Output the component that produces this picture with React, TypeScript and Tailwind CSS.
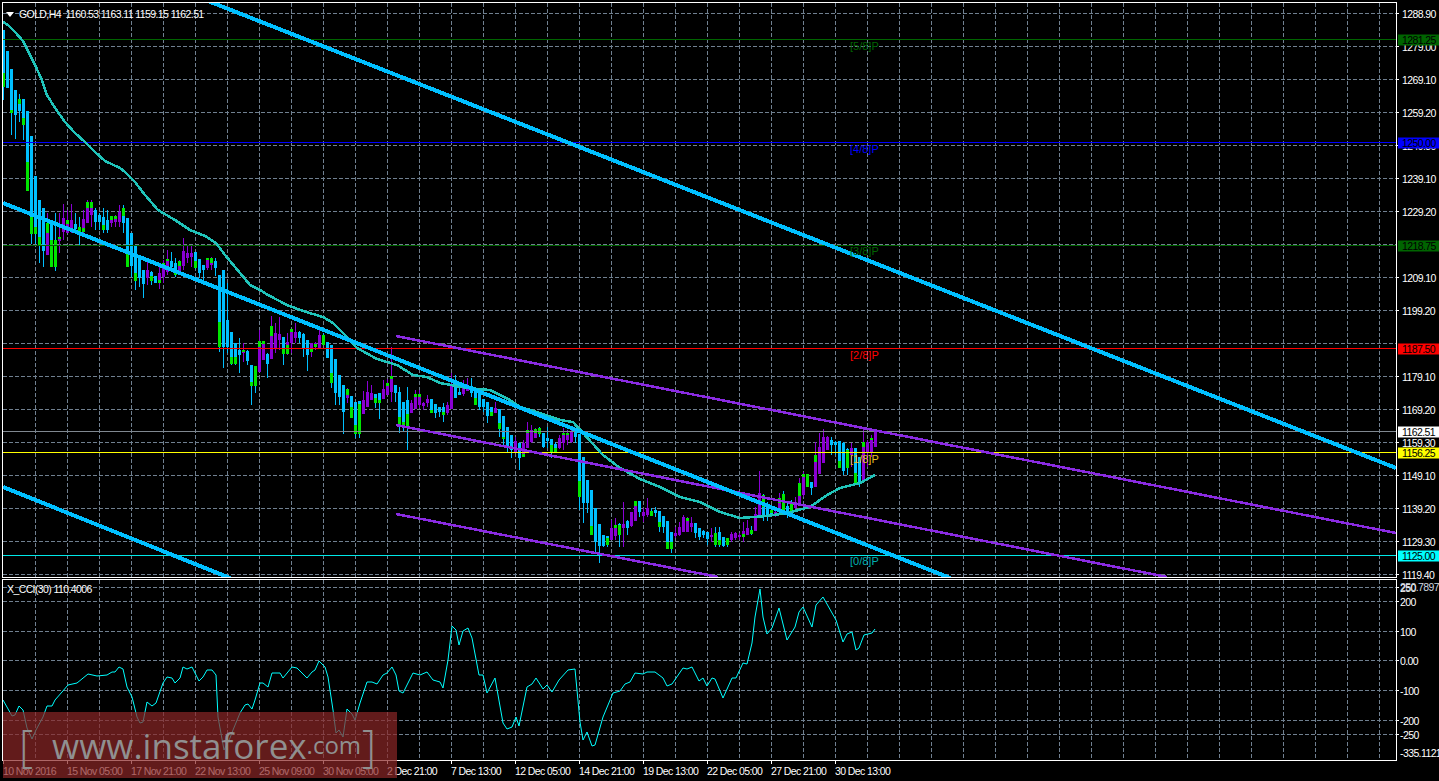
const FONT = "[font-family:'Liberation_Sans',Arial,sans-serif]";

type Row = [number, number, number, number, "b" | "p", number];

// candles traced off the chart: [wick top, body top, body bottom, wick bottom, colour, green part]
// y values are in thirds of a pixel, from the base of each block. green < 0 sits on top of the body
const A: Row[] = [
  [90, 90, 262, 300, "b", 42], [153, 153, 263, 263, "b", 0], [207, 207, 340, 405, "b", 10], [270, 270, 345, 418, "b", 0],
  [282, 297, 333, 365, "b", -15], [297, 297, 375, 420, "b", 20], [333, 333, 572, 572, "b", 87], [408, 408, 702, 733, "b", 52],
  [528, 528, 702, 733, "b", 22], [600, 600, 735, 790, "b", 23], [625, 625, 752, 800, "b", 0], [640, 670, 765, 765, "p", -30],
  [670, 670, 800, 800, "b", 80], [640, 720, 800, 812, "b", 80], [640, 712, 722, 760, "p", -5], [612, 655, 697, 720, "p", 0],
  [630, 660, 700, 700, "p", -12], [612, 660, 685, 700, "p", 0], [640, 672, 688, 700, "b", 0], [650, 680, 695, 735, "b", 15],
  [630, 657, 695, 700, "p", 13], [600, 605, 670, 670, "p", -18], [600, 605, 645, 680, "p", -18], [625, 630, 665, 690, "b", 0],
  [640, 645, 665, 690, "b", 0], [625, 652, 690, 700, "b", 14], [630, 660, 690, 700, "b", 0], [648, 648, 668, 680, "p", -12],
  [645, 648, 665, 680, "p", -8], [615, 635, 665, 680, "p", 0], [615, 625, 670, 700, "b", -25], [655, 655, 800, 800, "b", 47],
  [700, 700, 798, 830, "b", 0], [735, 735, 843, 870, "b", 23], [775, 775, 835, 860, "b", 0], [810, 810, 853, 895, "b", 0],
  [785, 810, 835, 855, "p", 0], [812, 815, 843, 855, "b", 14], [828, 828, 848, 850, "b", 0], [800, 820, 848, 868, "p", 10],
  [780, 790, 830, 848, "p", -10], [750, 778, 815, 825, "p", -6], [755, 782, 800, 815, "b", 0], [775, 790, 825, 830, "b", 15],
  [780, 783, 815, 825, "p", -15], [715, 753, 798, 810, "p", 0], [735, 760, 775, 790, "p", 0], [735, 758, 772, 800, "p", 0],
  [755, 757, 805, 808, "b", 22], [778, 778, 820, 835, "b", 0], [796, 796, 810, 850, "b", 0], [775, 775, 803, 810, "p", -7],
  [770, 775, 795, 810, "p", -15], [775, 782, 803, 828, "b", 0],
];

const B: Row[] = [
  [-45, -45, 170, 185, "b", 75], [-60, -60, 170, 235, "b", 0], [-20, 90, 170, 190, "b", 0], [125, 125, 222, 225, "b", 20],
  [160, 160, 222, 225, "b", 20], [145, 180, 195, 250, "b", 0], [160, 180, 188, 215, "p", -5], [180, 183, 213, 225, "b", 0],
  [225, 225, 288, 345, "b", 13], [228, 228, 288, 308, "b", 60], [120, 153, 245, 245, "p", -17], [153, 153, 210, 210, "p", -10],
  [190, 192, 222, 265, "b", 0], [78, 108, 207, 207, "p", -30], [100, 130, 175, 190, "p", 0], [82, 132, 150, 180, "p", 0],
  [140, 140, 192, 225, "b", 15], [130, 155, 192, 195, "p", 27], [118, 118, 160, 190, "p", -8], [100, 125, 145, 160, "p", 0],
  [122, 125, 145, 160, "b", 0], [130, 133, 175, 200, "b", 0], [150, 150, 195, 243, "b", 0], [160, 160, 185, 200, "p", 12],
  [155, 160, 172, 180, "p", 8], [120, 135, 175, 175, "p", 0], [130, 135, 165, 165, "b", 30], [155, 155, 205, 205, "b", 0],
  [165, 165, 280, 295, "b", 30], [208, 208, 308, 345, "b", 0], [255, 255, 320, 345, "b", 0], [285, 285, 365, 432, "b", 0],
  [295, 297, 325, 340, "p", -17], [318, 318, 384, 384, "b", 32], [336, 336, 432, 445, "b", 27], [332, 332, 432, 445, "b", 90],
  [302, 330, 372, 372, "p", 0], [273, 305, 350, 350, "p", 0], [285, 308, 330, 330, "p", 0], [312, 312, 340, 355, "b", 14],
  [310, 310, 338, 387, "b", 10], [270, 297, 327, 327, "p", 0], [268, 280, 315, 315, "p", -10], [172, 258, 305, 335, "p", -10],
  [285, 285, 310, 335, "b", 0], [292, 305, 405, 428, "b", 25], [335, 335, 405, 425, "b", 8], [292, 330, 410, 480, "b", 40],
  [330, 340, 370, 370, "p", 0], [300, 312, 358, 358, "p", -10], [300, 312, 345, 355, "p", -10], [335, 340, 348, 360, "p", 0],
  [315, 327, 340, 350, "p", 0], [327, 327, 368, 370, "b", 10], [342, 342, 368, 385, "b", 0], [350, 350, 365, 380, "b", 0],
  [340, 352, 375, 395, "b", 10], [335, 345, 368, 375, "p", 0], [250, 285, 357, 357, "p", 0], [255, 290, 325, 325, "b", 0],
  [290, 305, 316, 316, "b", 0], [270, 287, 312, 318, "p", 0], [265, 292, 302, 302, "p", 0], [265, 288, 310, 320, "b", 0],
  [297, 297, 345, 345, "b", 22], [305, 305, 352, 360, "b", 0], [328, 328, 352, 365, "b", 0], [335, 335, 378, 400, "b", 0],
  [352, 352, 378, 378, "b", 12], [335, 355, 368, 370, "p", 0], [358, 358, 418, 440, "b", 18], [378, 378, 448, 470, "b", 5],
  [412, 412, 475, 490, "b", 0], [435, 435, 480, 505, "b", 0], [440, 452, 490, 490, "p", 0], [460, 460, 503, 540, "b", 0],
  [450, 460, 500, 502, "p", 10], [395, 420, 473, 473, "p", -10], [405, 420, 455, 460, "p", 0], [415, 418, 443, 445, "p", -12],
  [412, 415, 432, 440, "b", 17], [428, 428, 470, 475, "b", 0], [410, 445, 453, 475, "b", 0], [448, 448, 485, 505, "b", 20],
  [455, 462, 485, 490, "b", 12], [435, 445, 475, 478, "p", 0],
];

const C: Row[] = [
  [85, 100, 130, 150, "p", -5], [90, 100, 120, 135, "p", -5], [85, 92, 125, 130, "p", 0], [88, 95, 110, 130, "b", 0],
  [103, 103, 290, 330, "b", 47], [170, 170, 310, 370, "b", 0], [240, 240, 310, 340, "b", 0], [270, 270, 405, 405, "b", 27],
  [325, 325, 425, 455, "b", 0], [372, 372, 437, 490, "b", 0], [405, 405, 437, 440, "b", 0], [408, 408, 435, 440, "b", 20],
  [360, 385, 420, 420, "p", 0], [355, 375, 408, 420, "p", -10], [370, 372, 405, 440, "b", 30], [305, 372, 385, 440, "p", 0],
  [360, 362, 385, 405, "b", 0], [335, 335, 378, 380, "p", 0], [303, 303, 362, 362, "p", -15], [303, 303, 335, 350, "b", 0],
  [325, 335, 348, 365, "p", 0], [295, 325, 345, 350, "p", 0], [325, 333, 348, 348, "b", 15], [320, 330, 340, 350, "b", 0],
  [332, 332, 382, 395, "b", 14], [348, 348, 382, 400, "b", 0], [362, 362, 447, 447, "b", 22], [395, 395, 447, 460, "b", 20],
  [380, 398, 408, 415, "p", 0], [365, 380, 405, 408, "p", 0], [345, 352, 395, 395, "p", 0], [350, 355, 395, 395, "p", -10],
  [350, 370, 380, 395, "p", 0], [370, 370, 398, 415, "b", 0], [385, 385, 412, 420, "b", 0], [390, 392, 405, 415, "b", 0],
  [395, 395, 418, 435, "b", 0], [385, 405, 410, 425, "p", 0], [380, 398, 435, 440, "b", 37], [380, 395, 435, 440, "b", 15],
  [410, 410, 438, 440, "b", 0], [415, 415, 435, 440, "b", 20], [395, 403, 420, 425, "p", 0], [395, 400, 413, 420, "p", 0],
  [400, 405, 412, 420, "p", 0], [365, 392, 412, 425, "p", 8], [360, 385, 405, 405, "p", 0], [378, 392, 403, 405, "b", 11],
  [320, 342, 392, 392, "p", 0], [213, 278, 355, 355, "p", 0], [282, 285, 350, 362, "b", -35], [305, 315, 350, 362, "b", 0],
  [320, 330, 345, 350, "b", -8], [325, 335, 345, 350, "p", 0], [280, 295, 335, 345, "p", -15], [272, 282, 330, 340, "b", 48],
  [310, 318, 340, 355, "b", 0], [300, 310, 340, 345, "b", 30], [290, 305, 325, 335, "p", 0], [235, 250, 310, 312, "p", -40],
  [215, 222, 285, 290, "p", -10], [222, 222, 262, 262, "b", 40], [245, 247, 265, 285, "b", 0], [125, 165, 262, 262, "p", -20],
  [100, 140, 222, 222, "p", 0], [88, 112, 188, 188, "p", 0], [108, 112, 150, 150, "p", 0], [110, 120, 135, 165, "b", 0],
  [122, 125, 135, 165, "b", 0], [122, 122, 205, 205, "b", 22], [125, 130, 212, 225, "b", 0], [145, 148, 205, 225, "b", 55],
  [130, 145, 165, 200, "p", 0], [145, 145, 250, 250, "b", 30], [170, 170, 250, 260, "b", 0], [85, 125, 240, 240, "p", -15],
  [120, 125, 160, 200, "p", 0], [105, 115, 155, 170, "p", -5], [90, 95, 142, 142, "p", 0],
];

const rows: [Row, number][] = [
  ...A.map((r): [Row, number] => [r, 0]),
  ...B.map((r): [Row, number] => [r, 290]),
  ...C.map((r): [Row, number] => [r, 400]),
];

const MA =
  "3,22 8,25 15,32 23,41 30,55 35,65 41,78 47,95 55,108 65,122 75,133 85,142 95,152 105,161 120,168 125,172 135,182 145,195 158,210 175,220 190,230 205,236 216,243 225,255 240,273 250,285 260,290 268,295 287,305 303,311 323,317 333,323 347,337 357,348 377,359 397,365 413,375 427,377 440,383 467,388 490,390 510,400 520,407 537,412 560,420 573,422 583,433 603,455 620,468 640,479 660,487 680,497 700,502 720,512 740,518 767,516 787,513 810,507 827,495 840,488 860,483 875,475";

const CCI =
  "3,700 12,716 15,715 19,706 23,710 27,728 32,739 36,730 43,717 47,706 52,706 55,700 62,692 68,685 77,683 88,674 97,676 107,675 112,672 115,672 119,667 123,669 127,687 132,697 137,717 140,723 143,722 147,702 152,706 156,703 163,683 167,677 172,678 175,683 180,678 183,667 187,669 192,667 199,681 203,677 207,670 212,670 216,675 218,717 224,750 230,738 233,730 240,713 245,705 248,704 252,709 255,700 260,683 263,683 268,687 272,673 280,673 283,678 292,667 297,668 307,678 312,672 315,670 319,661 325,667 328,677 333,710 336,733 339,730 343,737 347,709 352,714 355,720 360,703 367,682 372,682 377,684 383,675 387,673 392,667 396,675 399,691 403,693 413,673 420,675 427,672 433,680 440,682 443,688 448,660 452,626 456,630 459,645 463,631 468,628 472,638 479,675 483,675 487,693 495,678 503,723 507,729 512,727 516,717 519,726 527,687 532,684 536,678 543,689 547,685 552,692 559,680 568,670 575,669 580,722 583,740 587,732 592,746 595,745 603,717 613,693 620,691 625,684 630,682 635,673 643,674 647,672 655,672 663,678 667,686 672,684 683,668 687,669 692,667 699,681 703,678 707,686 712,678 715,679 723,698 732,678 736,678 743,663 747,664 752,643 755,617 760,589 763,617 767,634 772,628 779,608 787,640 795,627 799,612 803,607 812,627 816,605 823,597 836,620 843,642 847,634 852,632 856,650 859,648 864,635 872,633 875,629";

const LEVELS: [number, string][] = [
  [39, "#006400"],
  [142, "#0000ff"],
  [245, "#006400"],
  [348, "#ff0000"],
  [431, "#808890"],
  [452, "#ffff00"],
  [555, "#00e8e8"],
];

const MURREY: [number, string, string][] = [
  [46, "[5/8]P", "text-[#006400]"],
  [149, "[4/8]P", "text-[#0000ff]"],
  [251, "[3/8]P", "text-[#006400]"],
  [355, "[2/8]P", "text-[#ff0000]"],
  [459, "[1/8]P", "text-[#e8c020]"],
  [561, "[0/8]P", "text-[#00b0b0]"],
];

const PRICES: [number, string][] = [
  [13, "1288.90"], [46, "1279.00"], [79, "1269.10"], [112, "1259.20"], [145, "1249.30"], [178, "1239.10"],
  [211, "1229.20"], [277, "1209.10"], [310, "1199.20"], [376, "1179.10"], [409, "1169.20"], [442, "1159.30"],
  [475, "1149.10"], [508, "1139.20"], [541, "1129.30"], [574, "1119.40"],
];

const PRICE_BOXES: [number, string, string][] = [
  [39, "1281.25", "bg-[#006400]"],
  [142, "1250.00", "bg-[#0000ff]"],
  [245, "1218.75", "bg-[#006400]"],
  [348, "1187.50", "bg-[#ff0000]"],
  [431, "1162.51", "bg-white"],
  [452, "1156.25", "bg-[#ffff00]"],
  [555, "1125.00", "bg-[#00ffff]"],
];

const CCI_GRID: [number, string][] = [
  [587, "250"], [601, "200"], [631, "100"], [660, "0.00"], [690, "-100"], [720, "-200"], [734, "-250"],
];

const TIMES: [number, string][] = [
  [3, "10 Nov 2016"], [67, "15 Nov 05:00"], [131, "17 Nov 21:00"], [195, "22 Nov 13:00"], [259, "25 Nov 09:00"],
  [323, "30 Nov 05:00"], [387, "2 Dec 21:00"], [451, "7 Dec 13:00"], [515, "12 Dec 05:00"], [579, "14 Dec 21:00"],
  [643, "19 Dec 13:00"], [707, "22 Dec 05:00"], [771, "27 Dec 21:00"], [835, "30 Dec 13:00"],
];

const GRID_X = Array.from({ length: 43 }, (_, i) => 35 + i * 32);
const GRID_Y = Array.from({ length: 18 }, (_, i) => 13 + i * 33);

function Grid({ ys, top, bottom }: { ys: number[]; top: number; bottom: number }) {
  return (
    <g stroke="#708090" strokeDasharray="4 2" shapeRendering="crispEdges">
      {ys.map((y) => (
        <line key={y} x1={3} x2={1396} y1={y + 0.5} y2={y + 0.5} />
      ))}
      {GRID_X.map((x) => (
        <line key={x} x1={x + 0.5} x2={x + 0.5} y1={top} y2={bottom} />
      ))}
    </g>
  );
}

function Candle({ row, base, index }: { row: Row; base: number; index: number }) {
  const [hi, top, bottom, lo, kind, green] = row;
  const y = (v: number) => Math.round(base + v / 3);
  const color = kind === "b" ? "#00bfff" : "#8a00d4";
  const x = 2 + index * 4;
  const bodyTop = y(top);
  const bodyBottom = Math.max(y(bottom), bodyTop + 1);
  const part = Math.round(Math.abs(green) / 3);
  return (
    <g>
      <rect x={x + 1} y={y(hi)} width={1} height={Math.max(y(lo) - y(hi), 1)} fill={color} />
      <rect x={x} y={bodyTop} width={3} height={bodyBottom - bodyTop} fill={color} />
      {green !== 0 && (
        <rect x={x} y={green < 0 ? bodyTop : bodyBottom - part} width={3} height={part} fill="#00e600" />
      )}
    </g>
  );
}

function PriceChart() {
  return (
    <svg width={1393} height={574} viewBox="3 3 1393 574" className="block">
      <Grid ys={GRID_Y} top={3} bottom={577} />
      <g shapeRendering="crispEdges">
        {rows.map(([row, base], i) => (
          <Candle key={i} row={row} base={base} index={i} />
        ))}
        {LEVELS.map(([y, color]) => (
          <line key={y} x1={3} x2={1396} y1={y + 0.5} y2={y + 0.5} stroke={color} />
        ))}
        <polyline points={MA} fill="none" stroke="#20c4ba" strokeWidth={2.5} />
        <line x1={396} y1={336} x2={1396} y2={533} stroke="#8a2be2" strokeWidth={2.5} />
        <line x1={396} y1={425} x2={1167} y2={577} stroke="#8a2be2" strokeWidth={2.5} />
        <line x1={396} y1={514} x2={718} y2={577} stroke="#8a2be2" strokeWidth={2.5} />
        <line x1={208} y1={1} x2={1396} y2={468} stroke="#00bfff" strokeWidth={4} />
        <line x1={3} y1={203} x2={950} y2={578} stroke="#00bfff" strokeWidth={4} />
        <line x1={3} y1={487} x2={230} y2={578} stroke="#00bfff" strokeWidth={4} />
      </g>
    </svg>
  );
}

function CciChart() {
  return (
    <svg width={1393} height={180} viewBox="3 580 1393 180" className="block">
      <Grid ys={CCI_GRID.map(([y]) => y)} top={580} bottom={760} />
      <polyline points={CCI} fill="none" stroke="#00ffff" strokeWidth={1} />
    </svg>
  );
}

function AxisText({ y, rowTop, left, children }: { y: number; rowTop: number; left: string; children: React.ReactNode }) {
  return (
    <>
      <span className="absolute left-0 h-px w-[2px] bg-white" style={{ top: y - rowTop }} />
      <span className={`absolute -translate-y-1/2 leading-none text-white ${left}`} style={{ top: y - rowTop + 1 }}>
        {children}
      </span>
    </>
  );
}

export default function App() {
  return (
    <div
      className={`relative h-screen w-full overflow-hidden bg-black pl-[2px] pt-[2px] text-[10.5px] tracking-[-0.6px] ${FONT}`}
    >
      {/* price panel */}
      <div className="flex h-[576px]">
        <div className="relative h-full w-[1395px] border border-white">
          <PriceChart />
          <div className="absolute left-[3px] top-[6px] flex items-center gap-[5px] leading-none text-white">
            <svg width={8} height={5} viewBox="0 0 8 5">
              <path d="M0 0h8L4 5z" fill="#fff" />
            </svg>
            <span className="whitespace-pre">GOLD,H4  1160.53 1163.11 1159.15 1162.51</span>
          </div>
          {MURREY.map(([y, label, color]) => (
            <span
              key={label}
              className={`absolute left-[847px] -translate-y-1/2 text-[11px] leading-none tracking-normal ${color}`}
              style={{ top: y - 3 }}
            >
              {label}
            </span>
          ))}
        </div>
        <div className="relative flex-1">
          {PRICES.map(([y, label]) => (
            <AxisText key={y} y={y} rowTop={2} left="left-[5px]">
              {label}
            </AxisText>
          ))}
          {PRICE_BOXES.map(([y, label, bg]) => (
            <span
              key={y}
              className={`absolute left-px right-0 flex h-[11px] -translate-y-1/2 items-center pl-[4px] leading-none text-black ${bg}`}
              style={{ top: y - 1.5 }}
            >
              {label}
            </span>
          ))}
        </div>
      </div>

      {/* cci panel */}
      <div className="mt-px flex h-[182px]">
        <div className="relative h-full w-[1395px] border border-white">
          <CciChart />
          <span className="absolute left-[4px] top-[4px] leading-none text-white">X_CCI(30) 110.4006</span>
        </div>
        <div className="relative flex-1">
          {CCI_GRID.map(([y, label]) => (
            <AxisText key={y} y={y} rowTop={579} left="left-[3px]">
              {label}
            </AxisText>
          ))}
          <span className="absolute left-[3px] top-[3px] leading-none text-[#d0d8e0]">250.7897</span>
          <span className="absolute left-[3px] top-[169px] whitespace-nowrap leading-none text-white">-335.1121</span>
        </div>
      </div>

      {/* time axis */}
      <div className="relative h-[20px] text-white">
        {TIMES.map(([x, label]) => (
          <div key={x} className="absolute top-0" style={{ left: x - 2 }}>
            <span className="absolute left-0 top-0 h-[3px] w-px bg-white" />
            <span className="absolute left-0 top-[5px] whitespace-nowrap leading-none">{label}</span>
          </div>
        ))}
      </div>

      {/* watermark */}
      <div className="absolute left-[3px] top-[712px] flex h-[66px] w-[394px] items-center bg-[#8c2626]/70 pl-[16px] font-['Open_Sans',sans-serif] text-[#909090] tracking-normal">
        <span className="text-[44px] font-light leading-none">[</span>
        <span className="ml-[19px] whitespace-nowrap text-[35px] leading-none">www.instaforex</span>
        <span className="whitespace-nowrap text-[24px] leading-none">.com</span>
        <span className="ml-[1px] text-[44px] font-light leading-none">]</span>
      </div>
    </div>
  );
}
